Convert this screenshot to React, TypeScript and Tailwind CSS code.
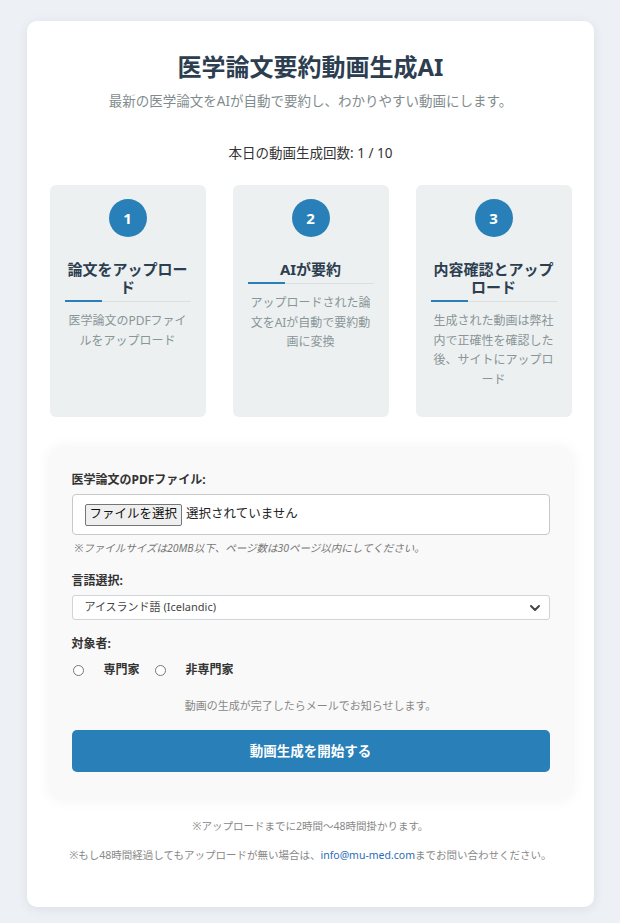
import { ChevronDown } from 'lucide-react';

const steps = [
  { no: 1, title: '論文をアップロード', desc: '医学論文のPDFファイルをアップロード' },
  { no: 2, title: 'AIが要約', desc: 'アップロードされた論文をAIが自動で要約動画に変換' },
  { no: 3, title: '内容確認とアップロード', desc: '生成された動画は弊社内で正確性を確認した後、サイトにアップロード' },
];

function StepCard({ no, title, desc }: { no: number; title: string; desc: string }) {
  return (
    <div className="flex flex-col items-center rounded-[6px] bg-[#ecf0f1] px-[15px] pt-[14px] pb-[28px] text-center">
      <div className="flex h-[38px] w-[38px] items-center justify-center rounded-full bg-[#2980b9] font-['Open_Sans'] text-[15px] font-bold text-white">
        {no}
      </div>
      <div className="relative mt-[23px] w-full border-b border-[#dcdfe1] pb-[5px] text-[15px] font-bold leading-[18px] text-[#2c3e50]">
        {title}
        <span className="absolute bottom-[-1px] left-0 h-[2px] w-[30%] bg-[#2980b9]" />
      </div>
      <p className="mt-[9px] text-[12px] leading-[19.5px] text-[#8a9597]">{desc}</p>
    </div>
  );
}

export default function App() {
  return (
    <div className="min-h-screen bg-[#edf1f6] pt-[21px] pb-[17px] font-['Noto_Sans','Noto_Sans_CJK_JP',sans-serif]">
      <div className="mx-auto w-[567px] rounded-[10px] bg-white pl-[23px] pr-[22px] pt-[30px] pb-[44px] shadow-[0_2px_12px_rgba(0,0,0,0.08)]">
        <h1 className="text-center text-[24px] font-bold leading-[32px] text-[#2c3e50]">医学論文要約動画生成AI</h1>
        <p className="mt-[8px] text-center text-[13.5px] leading-[20px] text-[#7f8c8d]">
          最新の医学論文をAIが自動で要約し、わかりやすい動画にします。
        </p>
        <p className="mt-[32px] text-center text-[13.5px] leading-[20px] text-[#333]">本日の動画生成回数: 1 / 10</p>

        <div className="mt-[22px] grid grid-cols-3 gap-[27px]">
          {steps.map((s) => (
            <StepCard key={s.no} {...s} />
          ))}
        </div>

        <div className="mt-[31px] rounded-[10px] bg-[#f9f9f9] px-[22px] pt-[22px] pb-[27px] shadow-[0_0_15px_rgba(0,0,0,0.06)]">
          <label className="block text-[12px] font-bold leading-[20px] text-[#333]">医学論文のPDFファイル:</label>
          <div className="mt-[4px] flex h-[41px] items-center rounded-[4px] border border-[#c8c8c8] bg-white pl-[12px]">
            <span className="flex h-[22px] items-center rounded-[2px] border border-[#767676] bg-[#efefef] px-[4px] text-[12.5px] text-[#111]">
              ファイルを選択
            </span>
            <span className="ml-[4px] text-[12.5px] text-[#222]">選択されていません</span>
          </div>
          <p className="mt-[5px] pl-[3px] text-[10.5px] italic leading-[16px] text-[#777]">
            ※ファイルサイズは20MB以下、ページ数は30ページ以内にしてください。
          </p>

          <label className="mt-[15px] block text-[12px] font-bold leading-[20px] text-[#333]">言語選択:</label>
          <div className="mt-[4px] flex h-[25px] items-center justify-between rounded-[3px] border border-[#ced4da] bg-white pl-[12px] pr-[6px]">
            <span className="text-[11px] text-[#444]">アイスランド語 (Icelandic)</span>
            <ChevronDown size={16} strokeWidth={3} className="text-[#444]" />
          </div>

          <label className="mt-[14px] block text-[12px] font-bold leading-[20px] text-[#333]">対象者:</label>
          <div className="mt-[6px] flex h-[20px] items-center text-[12px] font-bold text-[#333]">
            <span className="ml-[1px] h-[11px] w-[11px] rounded-full border border-[#777] bg-white" />
            <span className="ml-[20px]">専門家</span>
            <span className="ml-[15px] h-[11px] w-[11px] rounded-full border border-[#777] bg-white" />
            <span className="ml-[20px]">非専門家</span>
          </div>

          <p className="mt-[18px] text-center text-[11px] leading-[16px] text-[#888]">
            動画の生成が完了したらメールでお知らせします。
          </p>
          <button className="mt-[16px] flex h-[42px] w-full items-center justify-center rounded-[5px] bg-[#2980b9] text-[13.5px] font-bold text-white">
            動画生成を開始する
          </button>
        </div>

        <p className="mt-[19px] text-center text-[10.5px] leading-[16px] text-[#888]">
          ※アップロードまでに2時間〜48時間掛かります。
        </p>
        <p className="mt-[13px] text-center text-[10.5px] leading-[16px] text-[#888]">
          ※もし48時間経過してもアップロードが無い場合は、
          <a className="text-[#2a6db5]">info@mu-med.com</a>
          までお問い合わせください。
        </p>
      </div>
    </div>
  );
}
